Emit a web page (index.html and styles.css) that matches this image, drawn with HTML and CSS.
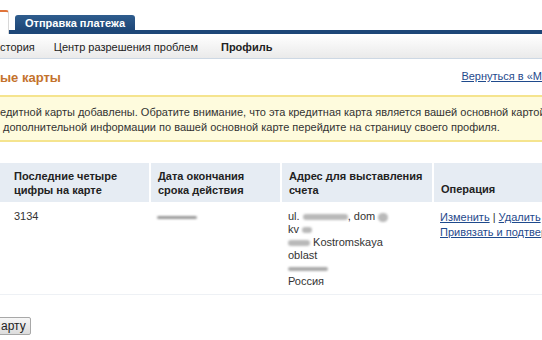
FILE: index.html
```html
<!DOCTYPE html>
<html>
<head>
    <title>Кредитные карты</title>
    <link rel="stylesheet" href="styles.css">
</head>
<body>
    <div class="tabs">
        <div class="tab tab-active"></div>
        <div class="tab tab-send">Отправка платежа</div>
    </div>
    <div class="subnav">
        <a class="subnav-item">стория</a>
        <a class="subnav-item">Центр разрешения проблем</a>
        <a class="subnav-item subnav-current">Профиль</a>
    </div>

    <div class="title-row">
        <h1 class="page-title">ые карты</h1>
        <a class="back-link" href="#">Вернуться в «М</a>
    </div>

    <div class="notice">
        <p class="notice-line">едитной карты добавлены. Обратите внимание, что эта кредитная карта является вашей основной картой</p>
        <p class="notice-line notice-second">дополнительной информации по вашей основной карте перейдите на страницу своего профиля.</p>
    </div>

    <table class="cards">
        <colgroup>
            <col class="w-num">
            <col class="w-date">
            <col class="w-addr">
            <col class="w-op">
        </colgroup>
        <thead>
            <tr>
                <th class="col-num">Последние четыре<br>цифры на карте</th>
                <th class="col-date">Дата окончания<br>срока действия</th>
                <th class="col-addr">Адрес для выставления<br>счета</th>
                <th class="col-op">Операция</th>
            </tr>
        </thead>
        <tbody>
            <tr>
                <td class="col-num">3134</td>
                <td class="col-date"><span class="blur blur-date"></span></td>
                <td class="col-addr">
                    ul. <span class="blur blur-street"></span>, dom <span class="blur blur-num"></span><br>
                    kv <span class="blur blur-kv"></span><br>
                    <span class="blur blur-city"></span> Kostromskaya<br>
                    oblast<br>
                    <span class="blur blur-zip"></span><br>
                    Россия
                </td>
                <td class="col-op">
                    <a href="#">Изменить</a> | <a href="#">Удалить</a><br>
                    <a href="#">Привязать и подтвер</a>
                </td>
            </tr>
        </tbody>
    </table>

    <div class="actions">
        <button class="btn" type="button">арту</button>
    </div>
</body>
</html>
```
FILE: styles.css
```css
body {
    margin: 0;
    font-family: "Liberation Sans", Arial, sans-serif;
    font-size: 11px;
    color: #333;
    background: #fff;
    overflow: hidden;
    white-space: nowrap;
}

.tabs {
    display: flex;
    align-items: flex-end;
    height: 30px;
    border-bottom: 4px solid #1d4677;
}

.tab {
    box-sizing: border-box;
}

.tab-active {
    width: 9px;
    height: 24px;
    margin-bottom: -4px;
    background: #fff;
    border-top: 2px solid #e0743a;
    border-right: 1px solid #d8d8d8;
    border-radius: 0 3px 0 0;
}

.tab-send {
    width: 120px;
    height: 15px;
    margin-left: 6px;
    padding-top: 2px;
    background: linear-gradient(#2f5d8e, #1d4677);
    border-radius: 3px 3px 0 0;
    color: #fff;
    font-size: 11px;
    font-weight: bold;
    text-align: center;
    line-height: 12px;
}

.subnav {
    display: flex;
    align-items: center;
    height: 23px;
    padding-top: 1px;
    background: linear-gradient(#fff, #eaeaea);
    border-bottom: 1px solid #cdd8e4;
    font-size: 11px;
}

.subnav-item {
    color: #222;
    margin-right: 19px;
}

.subnav-current {
    font-weight: bold;
    margin-left: 4px;
}

.title-row {
    display: flex;
    justify-content: space-between;
    align-items: center;
    height: 36px;
}

.page-title {
    margin: 0;
    font-size: 13px;
    font-weight: bold;
    color: #c4722c;
}

.back-link {
    color: #1f4a8c;
    font-size: 11px;
    margin-bottom: 2px;
}

.notice {
    background: #fefbdd;
    border-top: 2px solid #f5e48e;
    border-bottom: 2px solid #f5e48e;
    padding: 8px 0 5px;
    overflow: hidden;
}

.notice p {
    margin: 0;
    line-height: 15px;
}

.notice-second {
    padding-left: 3px;
}

.cards {
    border-collapse: collapse;
    table-layout: fixed;
    margin-top: 21px;
    width: 100%;
}

.w-num { width: 150px; }
.w-date { width: 131px; }
.w-addr { width: 152px; }

.cards th {
    background: #e6ecf3;
    font-weight: bold;
    text-align: left;
    vertical-align: bottom;
    line-height: 14px;
    padding: 6px 7px 5px;
    border-left: 2px solid #fff;
    color: #222;
}

.cards td {
    vertical-align: top;
    line-height: 13px;
    padding: 8px 7px 6px;
    border-bottom: 1px solid #eef1f5;
}

.cards .col-num {
    padding-left: 14px;
    border-left: none;
}

.cards .col-op {
    line-height: 15px;
    padding-right: 0;
}

.cards a {
    color: #1f4a8c;
}

.blur {
    display: inline-block;
    height: 6px;
    background: #b9b9b9;
    border-radius: 3px;
    filter: blur(1.2px);
    vertical-align: middle;
}

.blur-date { width: 40px; height: 3px; background: #999; }
.blur-street { width: 45px; }
.blur-num { width: 10px; height: 9px; border-radius: 5px; }
.blur-kv { width: 10px; }
.blur-city { width: 22px; }
.blur-zip { width: 40px; height: 4px; background: #aaa; }

.actions {
    margin-top: 22px;
}

.btn {
    font-family: "Liberation Sans", Arial, sans-serif;
    font-size: 12px;
    color: #222;
    margin-left: -6px;
    padding: 1px 4px 1px 6px;
    height: 18px;
    background: linear-gradient(#f7f7f7, #dcdcdc);
    border: 1px solid #a8a8a8;
    border-radius: 2px;
}
```
